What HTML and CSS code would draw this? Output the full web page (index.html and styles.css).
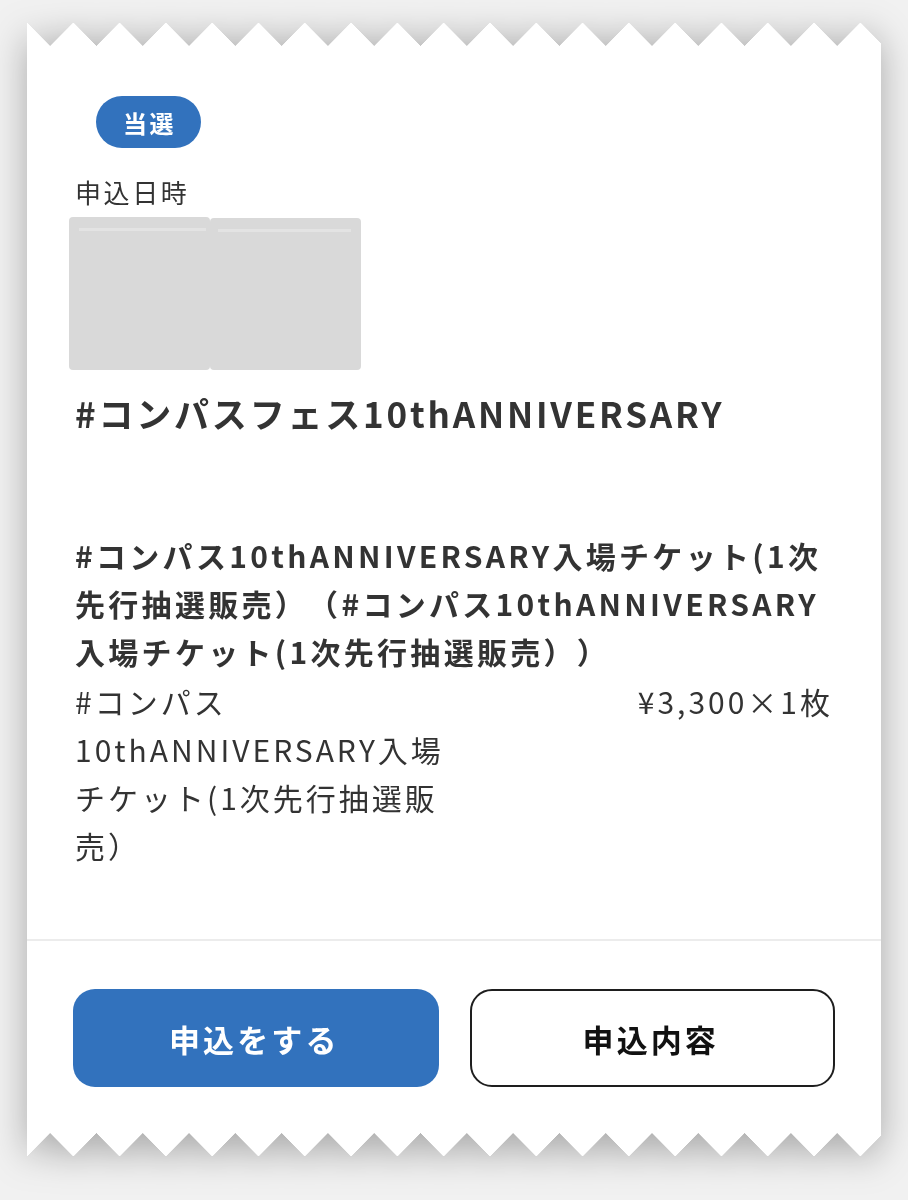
FILE: index.html
```html
<!DOCTYPE html>
<html lang="ja">
<head>
<meta charset="utf-8">
<title>チケット</title>
<link rel="stylesheet" href="styles.css">
</head>
<body>
<div class="ticket">
  <div class="edge edge-top"></div>
  <div class="card">
    <div class="main">
      <span class="badge">当選</span>
      <div class="label">申込日時</div>
      <div class="redacted">
        <div class="blur-a"></div>
        <div class="blur-b"></div>
      </div>
      <h1 class="event">#コンパスフェス10thANNIVERSARY</h1>
      <h2 class="product">#コンパス10thANNIVERSARY入場チケット(1次先行抽選販売）（#コンパス10thANNIVERSARY入場チケット(1次先行抽選販売））</h2>
      <div class="item">
        <div class="item-name">#コンパス10thANNIVERSARY入場チケット(1次先行抽選販売）</div>
        <div class="item-price">¥3,300×1枚</div>
      </div>
    </div>
    <div class="actions">
      <button class="btn btn-primary">申込をする</button>
      <button class="btn btn-outline">申込内容</button>
    </div>
  </div>
  <div class="edge edge-bottom"></div>
</div>
</body>
</html>
```
FILE: styles.css
```css
html, body {
  margin: 0;
  padding: 0;
}
body {
  background: #f1f1f1;
  font-family: "Noto Sans CJK JP", "Noto Sans", sans-serif;
  color: #333;
  width: 908px;
  height: 1200px;
  overflow: hidden;
  text-spacing-trim: space-all;
}
.ticket {
  margin: 23px 27px 0 27px;
  filter: drop-shadow(0 6px 18px rgba(0, 0, 0, 0.3));
}
.edge {
  height: 23px;
  background-size: 46.3px 23px;
  background-repeat: repeat-x;
}
.edge-top {
  background-image: conic-gradient(from -45deg at 50% 100%, transparent 90deg, #fff 0);
}
.edge-bottom {
  height: 24px;
  background-size: 46.3px 24px;
  background-image: conic-gradient(from 135deg at 50% 0, transparent 90deg, #fff 0);
}
.card {
  background: #fff;
}
.main {
  padding: 50px 48px 0 48px;
  height: 895px;
  box-sizing: border-box;
  border-bottom: 2px solid #ececec;
}
.badge {
  display: inline-flex;
  align-items: center;
  justify-content: center;
  width: 105px;
  height: 52px;
  margin-left: 21px;
  border-radius: 26px;
  background: #3272bd;
  color: #fff;
  font-weight: 700;
  font-size: 24px;
  letter-spacing: 2.4px;
  padding-left: 2px;
  box-sizing: border-box;
}
.label {
  font-size: 26px;
  letter-spacing: 2.6px;
  line-height: 40px;
  margin-top: 24px;
}
.redacted {
  display: flex;
  margin-top: 5px;
  margin-left: -6px;
  height: 153px;
}
.blur-a, .blur-b {
  position: relative;
  background: #d9d9d9;
  border-radius: 4px;
}
.blur-a {
  width: 141px;
}
.blur-b {
  width: 151px;
  margin-top: 1px;
}
.blur-a::before, .blur-b::before {
  content: "";
  position: absolute;
  top: 11px;
  left: 10px;
  right: 4px;
  height: 3px;
  background: #e3e3e3;
}
.blur-b::before {
  left: 8px;
  right: 10px;
}
.event {
  margin: 20px 0 0 0;
  font-size: 35px;
  font-weight: 700;
  line-height: 46px;
  letter-spacing: 2.8px;
  color: #333;
}
.product {
  margin: 95px 0 0 0;
  font-size: 30px;
  font-weight: 700;
  line-height: 48px;
  letter-spacing: 3.3px;
  color: #333;
}
.item {
  display: flex;
  justify-content: space-between;
  align-items: flex-start;
  margin-top: 2px;
}
.item-name {
  width: 380px;
  font-size: 30px;
  line-height: 48px;
  letter-spacing: 3px;
}
.item-price {
  font-size: 30px;
  line-height: 48px;
  letter-spacing: 3px;
}
.actions {
  display: grid;
  grid-template-columns: 1fr 1fr;
  gap: 31px;
  padding: 48px 46px 46px 46px;
}
.btn {
  height: 98px;
  border-radius: 22px;
  font-family: "Noto Sans CJK JP", "Noto Sans", sans-serif;
  font-size: 31px;
  font-weight: 700;
  letter-spacing: 3.1px;
  padding-left: 3px;
  cursor: pointer;
}
.btn-primary {
  background: #3272bd;
  color: #fff;
  border: none;
}
.btn-outline {
  background: #fff;
  color: #111;
  border: 2px solid #1e1e1e;
}
```
